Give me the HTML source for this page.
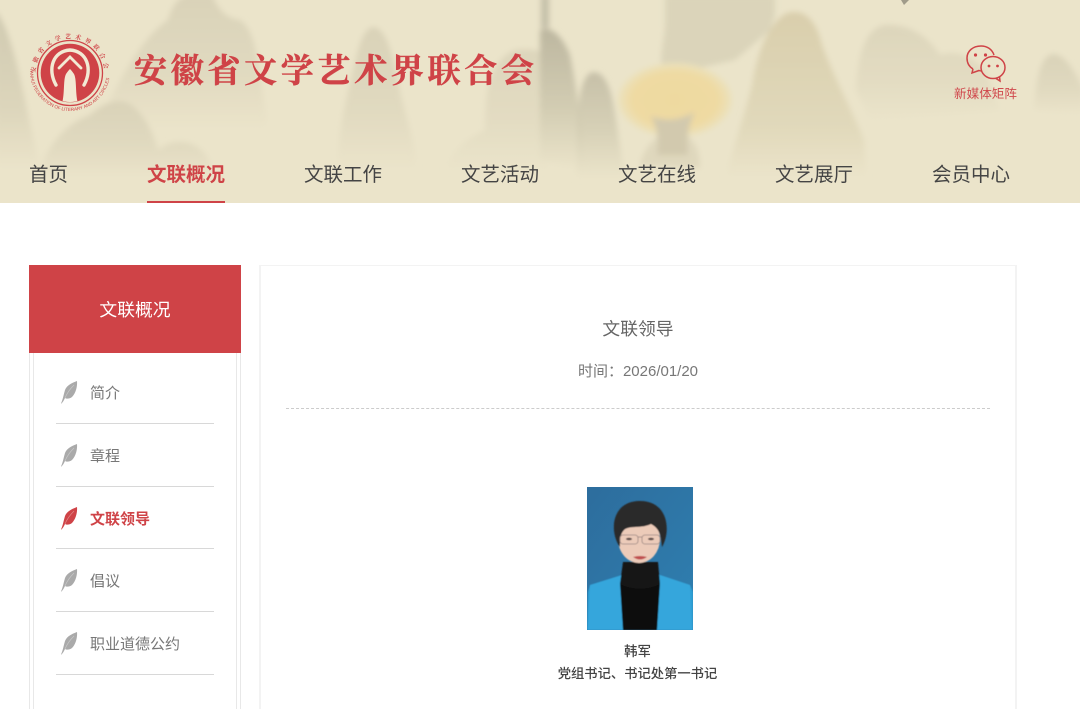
<!DOCTYPE html>
<html lang="zh"><head><meta charset="utf-8"><title>文联领导</title>
<style>
html,body{margin:0;padding:0;background:#fff;width:1080px;height:709px;overflow:hidden}
body{position:relative;font-family:"Liberation Sans","Noto Sans CJK SC",sans-serif}
div,a,span{position:absolute;white-space:nowrap}
.hdr{left:0;top:0;width:1080px;height:203px;background:#ebe4ca;overflow:hidden}
.title{left:134px;top:46px;font:700 33px/46px "Noto Serif CJK SC",serif;letter-spacing:3.7px;color:#cf4347;-webkit-text-stroke:.5px #cf4347}
.nav{top:158.500px;font:400 19.500px/28px "Noto Sans CJK SC",sans-serif;color:#444}
.on{color:#cf4347;font-weight:700}
.ul{left:147px;top:201px;width:78px;height:2px;background:#cf4347}
.nm{left:954px;top:84px;font:400 12.600px/17px "Noto Sans CJK SC",sans-serif;color:#d0484c}
.sh{left:29px;top:265px;width:212px;height:88px;background:#cf4347;color:#fff;text-align:center;font:400 17.800px/88px "Noto Sans CJK SC",sans-serif}
.b{background:#e8e8e8;width:1px;top:353px;height:356px}
.it{left:90px;font:400 15px/22px "Noto Sans CJK SC",sans-serif;color:#777}
.ln{left:56px;width:158px;height:1px;background:#d8d8d8}
.card{left:259px;top:265px;width:754px;height:460px;border:2px solid #f3f3f3;border-width:1px 2px}
.ct{left:259px;width:758px;text-align:center}
</style></head><body>
<div class="hdr">
<svg width="1080" height="203" style="position:absolute;left:0;top:0">
<defs>
<filter id="bl" x="-10%" y="-10%" width="120%" height="120%"><feGaussianBlur stdDeviation="3"/></filter>
<linearGradient id="g1" x1="0" y1="0" x2="0" y2="1"><stop offset="0" stop-color="#d0cab1"/><stop offset=".6" stop-color="#dcd5bb"/><stop offset="1" stop-color="#ebe4ca"/></linearGradient>
<linearGradient id="g2" x1="0" y1="0" x2="0" y2="1"><stop offset="0" stop-color="#d9d2b8"/><stop offset=".6" stop-color="#e1dac0"/><stop offset="1" stop-color="#ebe4ca"/></linearGradient>
<linearGradient id="g3" x1="0" y1="0" x2="0" y2="1"><stop offset="0" stop-color="#bdb7a0"/><stop offset=".55" stop-color="#d2ccb2"/><stop offset="1" stop-color="#ebe4ca"/></linearGradient>
<linearGradient id="g4" x1="0" y1="0" x2="0" y2="1"><stop offset="0" stop-color="#d9ceac"/><stop offset=".7" stop-color="#e1d9bb"/><stop offset="1" stop-color="#ebe4ca"/></linearGradient>
<radialGradient id="tr"><stop offset="0" stop-color="#eed9a0"/><stop offset=".75" stop-color="#efdaa2"/><stop offset="1" stop-color="#ebe2be"/></radialGradient>
</defs>
<g filter="url(#bl)">
<path d="M-5 10C8 25 16 60 24 95 30 125 36 150 40 170H-5Z" fill="url(#g1)"/>
<path d="M110 100C125 70 145 35 168 20 172 5 180-5 190-5H212C218 8 224 18 240 20 255 30 258 60 262 90L268 130H125Z" fill="url(#g2)"/>
<path d="M40 170C50 140 70 122 90 115 108 98 125 98 135 108 150 122 155 140 158 150 175 136 200 140 210 162V178H40Z" fill="url(#g2)"/>
<path d="M338 170C338 130 345 105 352 75 358 50 362 28 374 27 390 30 395 70 402 100 408 125 416 145 416 170Z" fill="url(#g2)"/>
<path d="M445 170C455 145 470 138 485 130 485 90 490 60 515 50 532 48 545 50 548 60V170Z" fill="url(#g2)" opacity=".8"/>
<path d="M540 160V30C550 25 562 35 570 55 576 85 582 125 585 170Z" fill="url(#g3)"/>
<path d="M541 28V-5H549V28Z" fill="#c5c0a9"/>
<path d="M576 178C578 140 574 85 590 73 605 68 612 90 616 120 620 145 622 160 625 178Z" fill="url(#g3)" opacity=".8"/>
<path d="M665-5H775V15L770 30 735 60 668 75C655 70 665 40 665 25Z" fill="#d8d1b7" opacity=".85"/>
<path d="M726 178C732 150 742 125 752 85 758 50 768 25 785 14 800 8 815 15 822 45 835 80 852 110 864 140L866 178Z" fill="url(#g4)"/>
<path d="M856 90C858 55 865 28 885 25 905 24 925 32 940 55 955 50 970 55 985 70L1000 110 870 120Z" fill="url(#g2)" opacity=".8"/>
<path d="M1034 110C1036 80 1040 56 1053 54 1066 55 1075 72 1084 90V115Z" fill="url(#g2)"/>
<path d="M640 165C645 145 655 135 675 132 695 135 700 150 700 168Z" fill="#dcd4ba" opacity=".8"/>
<ellipse cx="675" cy="100" rx="57" ry="37" fill="url(#tr)"/>
<path d="M657 155C660 135 655 122 650 116 668 122 680 120 695 112 688 125 686 140 688 155Z" fill="#d2c9ae"/>
</g>
<path d="M901 0L904 5 909 0Z" fill="#a09b8a"/>
<!-- logo -->
<defs>
<path id="ta" d="M35.500 73A34.500 34.500 0 0 1 104.500 73"/>
<path id="tb" d="M30 71A40 40 0 0 0 110 71"/>
<clipPath id="cc"><circle cx="70" cy="73" r="29"/></clipPath>
</defs>
<circle cx="70" cy="73" r="32.500" fill="none" stroke="#cf4347" stroke-width="1.300"/>
<circle cx="70" cy="73" r="29.300" fill="#cf4347"/>
<text fill="#cf4347" font-family="Noto Serif CJK SC,serif" font-weight="700" font-size="6" letter-spacing="3.800"><textPath href="#ta" startOffset="0">安徽省文学艺术界联合会</textPath></text>
<text fill="#cf4347" font-family="Liberation Sans,sans-serif" font-size="4.600"><textPath href="#tb" startOffset="0">ANHUI FEDERATION OF LITERARY AND ART CIRCLES</textPath></text>
<g clip-path="url(#cc)">
<g fill="none" stroke="#f2ead4" stroke-width="3.400" stroke-linecap="round">
<path d="M56 85C47 69 53 51 70 50 87 51 93 69 84 85"/>
<path d="M59 68L70 57 81 68" stroke-width="2.800"/>
</g>
<path d="M62 104C65 92 63 80 66 74 68 71 69 70 70 69 71 70 72 71 74 74 77 80 75 92 78 104Z" fill="#f2ead4"/>
</g>
<!-- wechat -->
<g fill="none" stroke="#cf4347" stroke-width="1.500">
<path d="M973 69C968 66 967 61 967 58 967 51 973 46 981 46 987 46 992 49 994 55"/>
<path d="M973 69L972 73 979 70.500C980 71 981 71 982 71"/>
<ellipse cx="993" cy="67.500" rx="12" ry="11"/>
<path d="M996 78.500L1000 81 999.500 76.500"/>
</g>
<g fill="#cf4347"><circle cx="975.500" cy="55" r="1.600"/><circle cx="985.500" cy="55" r="1.600"/><circle cx="989" cy="66" r="1.400"/><circle cx="997.500" cy="66" r="1.400"/></g>
</svg>
<div class="title">安徽省文学艺术界联合会</div>
<div class="nav" style="left:29px">首页</div>
<div class="nav on" style="left:147px">文联概况</div>
<div class="ul"></div>
<div class="nav" style="left:304px">文联工作</div>
<div class="nav" style="left:461px">文艺活动</div>
<div class="nav" style="left:618px">文艺在线</div>
<div class="nav" style="left:775px">文艺展厅</div>
<div class="nav" style="left:932px">会员中心</div>
<div class="nm">新媒体矩阵</div>
</div>

<div class="sh">文联概况</div>
<div class="b" style="left:29px"></div><div class="b" style="left:33px"></div><div class="b" style="left:236px"></div><div class="b" style="left:240px"></div>

<svg style="position:absolute;left:60px;top:380px" width="18" height="24" viewBox="0 0 18 24"><path d="M1 23.500C3 19 3.500 15 5 10 7 5 12 3 17 1 17.500 6 16 13 12 17 9.500 19 6.500 19 5 18 4 20 3 22 1.500 23.500Z" fill="#aaa"/><path d="M5 18C7 13 10 9 14 5" stroke="#c8c8c8" stroke-width=".7" fill="none"/></svg>
<svg style="position:absolute;left:60px;top:443px" width="18" height="24" viewBox="0 0 18 24"><path d="M1 23.500C3 19 3.500 15 5 10 7 5 12 3 17 1 17.500 6 16 13 12 17 9.500 19 6.500 19 5 18 4 20 3 22 1.500 23.500Z" fill="#aaa"/><path d="M5 18C7 13 10 9 14 5" stroke="#c8c8c8" stroke-width=".7" fill="none"/></svg>
<svg style="position:absolute;left:60px;top:506px" width="18" height="24" viewBox="0 0 18 24"><path d="M1 23.500C3 19 3.500 15 5 10 7 5 12 3 17 1 17.500 6 16 13 12 17 9.500 19 6.500 19 5 18 4 20 3 22 1.500 23.500Z" fill="#cf4347"/><path d="M5 18C7 13 10 9 14 5" stroke="#e08a8a" stroke-width=".7" fill="none"/></svg>
<svg style="position:absolute;left:60px;top:568px" width="18" height="24" viewBox="0 0 18 24"><path d="M1 23.500C3 19 3.500 15 5 10 7 5 12 3 17 1 17.500 6 16 13 12 17 9.500 19 6.500 19 5 18 4 20 3 22 1.500 23.500Z" fill="#aaa"/><path d="M5 18C7 13 10 9 14 5" stroke="#c8c8c8" stroke-width=".7" fill="none"/></svg>
<svg style="position:absolute;left:60px;top:631px" width="18" height="24" viewBox="0 0 18 24"><path d="M1 23.500C3 19 3.500 15 5 10 7 5 12 3 17 1 17.500 6 16 13 12 17 9.500 19 6.500 19 5 18 4 20 3 22 1.500 23.500Z" fill="#aaa"/><path d="M5 18C7 13 10 9 14 5" stroke="#c8c8c8" stroke-width=".7" fill="none"/></svg>

<div class="it" style="top:382px">简介</div><div class="ln" style="top:423px"></div>
<div class="it" style="top:445px">章程</div><div class="ln" style="top:486px"></div>
<div class="it" style="top:508px;color:#cf4347;font-weight:700">文联领导</div><div class="ln" style="top:548px"></div>
<div class="it" style="top:570px">倡议</div><div class="ln" style="top:611px"></div>
<div class="it" style="top:633px">职业道德公约</div><div class="ln" style="top:674px"></div>

<div class="card"></div>
<div class="ct" style="top:315px;font:400 17.800px/26px 'Noto Sans CJK SC',sans-serif;color:#666">文联领导</div>
<div class="ct" style="top:362px;font:400 15px/20px 'Liberation Sans','Noto Sans CJK SC',sans-serif;color:#777">时间：2026/01/20</div>
<div style="left:286px;top:408px;width:704px;border-top:1px dashed #ccc"></div>

<svg style="position:absolute;left:587px;top:487px" width="106" height="143" viewBox="0 0 106 143">
<defs><linearGradient id="bg" x1="0" y1="0" x2="1" y2="1"><stop offset="0" stop-color="#2d6d9d"/><stop offset="1" stop-color="#2f7fb0"/></linearGradient><filter id="s"><feGaussianBlur stdDeviation=".6"/></filter></defs>
<rect width="106" height="143" fill="url(#bg)"/>
<g filter="url(#s)">
<path d="M0 143L1 105 3 98 35 88 73 88 103 98 106 105V143Z" fill="#2e9fd4"/>
<path d="M3 98L35 88 36 143H1Z" fill="#35a6dc"/><path d="M103 98L73 88 70 143H105Z" fill="#35a6dc"/>
<path d="M33 96L36 143H70L73 96Z" fill="#111"/>
<path d="M36 75H71L73 97Q53 106 33 97Z" fill="#161616"/>
<ellipse cx="52" cy="52" rx="21" ry="24" fill="#eccbb9"/>
<path d="M33 60C22 45 24 14 53 14 82 14 84 45 75 60L74 52C73 45 70 40 64 37 54 42 42 38 37 43 33 47 33 53 33 60Z" fill="#2a2a2c"/>
<g fill="none" stroke="#9a8580" stroke-width=".8"><rect x="33" y="48" width="18" height="9" rx="3"/><rect x="55" y="48" width="18" height="9" rx="3"/><path d="M51 50H55"/></g>
<ellipse cx="42" cy="52" rx="3" ry="1.300" fill="#5a4a46"/><ellipse cx="64" cy="52" rx="3" ry="1.300" fill="#5a4a46"/>
<path d="M46 70Q53 68 60 70Q53 75 46 70Z" fill="#c0504f"/>
</g>
</svg>
<div style="left:584.500px;top:641px;width:106px;text-align:center;font:500 13.500px/18px 'Noto Sans CJK SC',sans-serif;color:#444">韩军</div>
<div style="left:540px;top:664px;width:195px;text-align:center;font:500 13.300px/18px 'Noto Sans CJK SC',sans-serif;color:#444">党组书记、书记处第一书记</div>
</body></html>
